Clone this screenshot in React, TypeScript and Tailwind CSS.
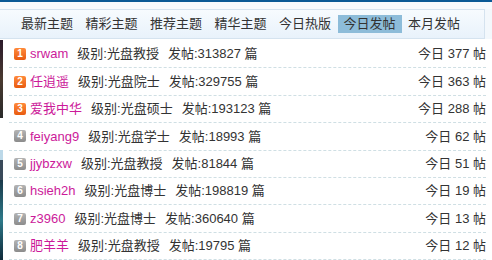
import React from 'react';

interface PostRow {
    rank: number;
    name: string;
    level: string;
    total: number;
    today: number;
}

const tabs = ['最新主题', '精彩主题', '推荐主题', '精华主题', '今日热版', '今日发帖', '本月发帖'];

const rows: PostRow[] = [
    { rank: 1, name: 'srwam', level: '光盘教授', total: 313827, today: 377 },
    { rank: 2, name: '任逍遥', level: '光盘院士', total: 329755, today: 363 },
    { rank: 3, name: '爱我中华', level: '光盘硕士', total: 193123, today: 288 },
    { rank: 4, name: 'feiyang9', level: '光盘学士', total: 18993, today: 62 },
    { rank: 5, name: 'jjybzxw', level: '光盘教授', total: 81844, today: 51 },
    { rank: 6, name: 'hsieh2h', level: '光盘博士', total: 198819, today: 19 },
    { rank: 7, name: 'z3960', level: '光盘博士', total: 360640, today: 13 },
    { rank: 8, name: '肥羊羊', level: '光盘教授', total: 19795, today: 12 },
];

export default function App() {
    return (
        <div className="w-[492px] h-[260px] overflow-hidden bg-white text-[13px] text-[#333] font-['Liberation_Sans','Noto_Sans_CJK_SC',sans-serif]">
            <div className="h-[2px] bg-[#0b5a96]" />
            <div className="h-[7px] bg-[#f7fafd]" />
            <div className="flex">
                <div className="w-[485px] h-[30px] flex items-center pl-[15px] border-y border-r border-[#d5e3ef] bg-gradient-to-b from-[#f7fbfe] to-[#e9f2fb]">
                    {tabs.map((t) => (
                        <span
                            key={t}
                            className={`px-[6px] h-[18px] leading-[18px] mr-[0.5px] ${t === '今日发帖' ? 'bg-[#8dbcd9]' : ''}`}
                        >
                            {t}
                        </span>
                    ))}
                </div>
                <div className="flex-1 bg-[#f3f8fc]" />
            </div>
            <div className="flex">
                <div className="w-[3px] mt-[1px] flex flex-col">
                    <div className="h-[78px] bg-gradient-to-b from-[#2b1a2a] via-[#4a3a30] to-[#2a2a2a]" />
                    <div className="h-[32px] bg-white" />
                    <div className="h-[10px] bg-[#bcd8e8]" />
                    <div className="h-[20px] bg-[#3a4a5a]" />
                    <div className="flex-1 bg-gradient-to-b from-[#1a3a4a] via-[#2e7a8a] to-[#0f2a3a]" />
                </div>
                <div className="w-[477px] ml-[6px] pt-[2px]">
                    {rows.map((r) => (
                        <div
                            key={r.rank}
                            className="h-[27.4px] flex items-center border-b border-dashed border-[#cfdfe4] pl-[5px]"
                        >
                            <span
                                className={`w-[12px] h-[12px] rounded-[2px] text-white text-[10px] leading-[12px] text-center font-bold ${r.rank <= 3 ? 'bg-gradient-to-b from-[#ff8a3a] to-[#e85a0c]' : 'bg-gradient-to-b from-[#b4b4b4] to-[#8c8c8c]'}`}
                            >
                                {r.rank}
                            </span>
                            <span className="ml-[4px] text-[#cc1a9a]">{r.name}</span>
                            <span className="ml-[9px]">级别:{r.level}</span>
                            <span className="ml-[9px]">发帖:{r.total} 篇</span>
                            <span className="ml-auto">今日 {r.today} 帖</span>
                        </div>
                    ))}
                </div>
            </div>
        </div>
    );
}
